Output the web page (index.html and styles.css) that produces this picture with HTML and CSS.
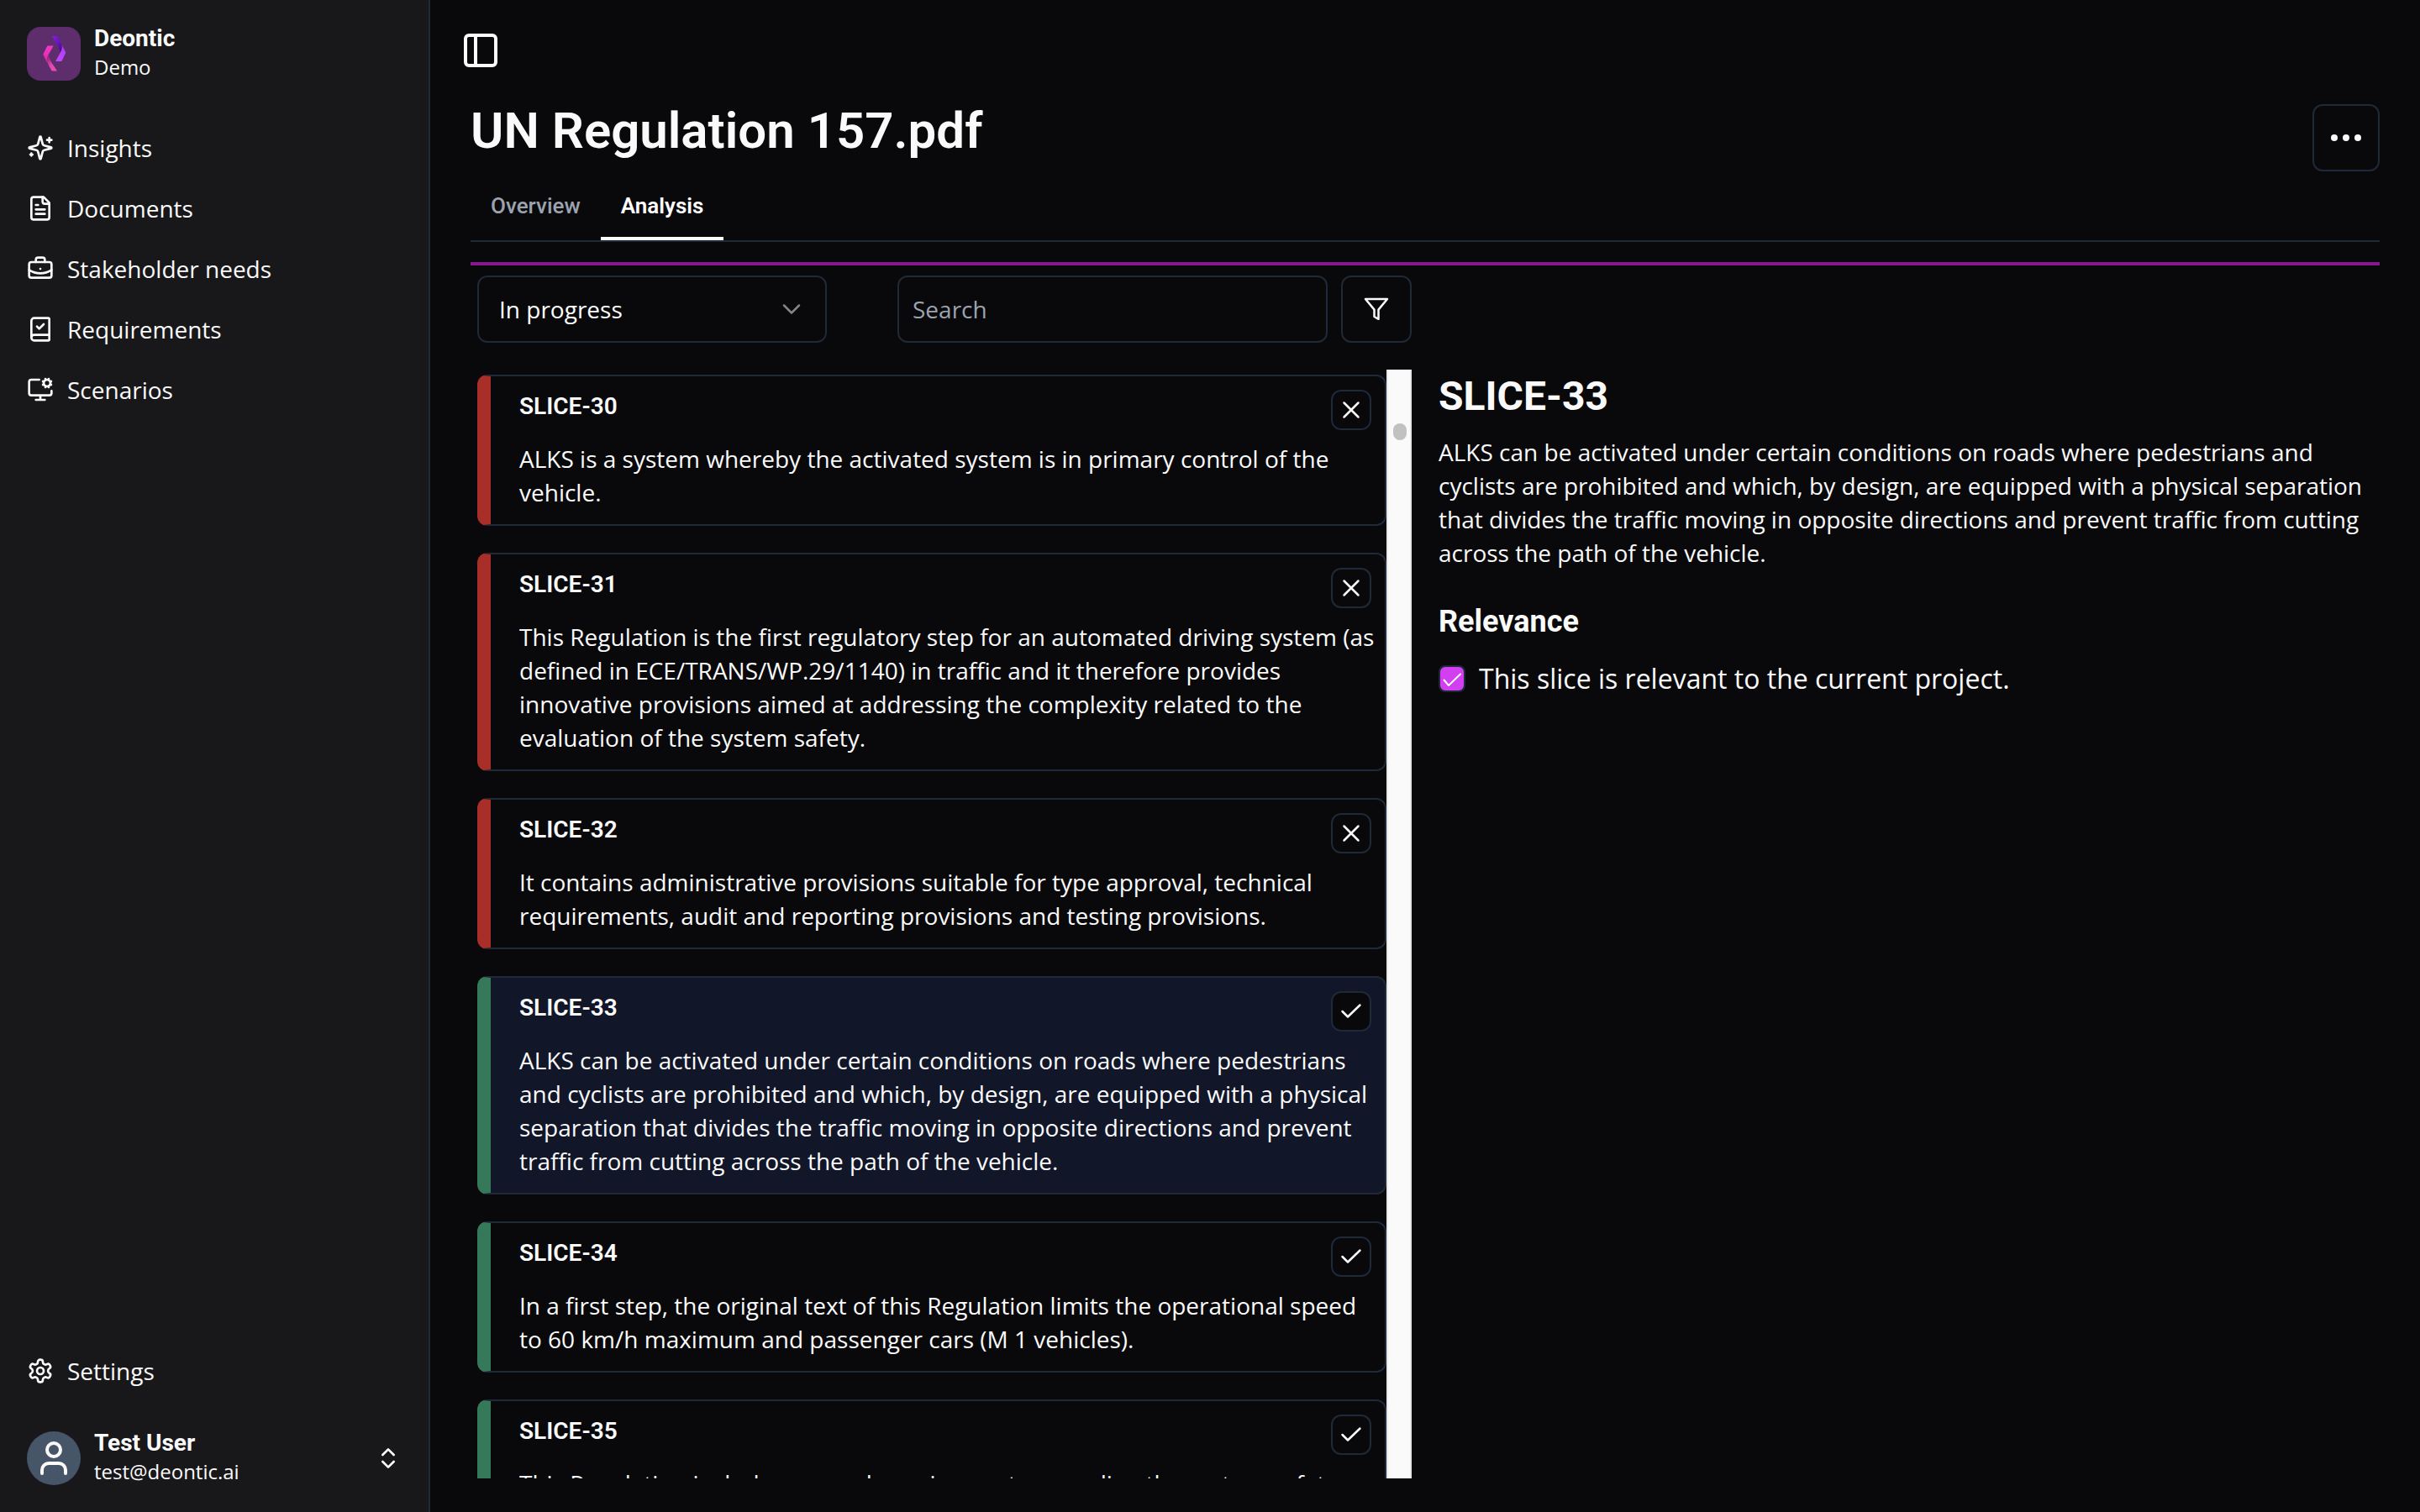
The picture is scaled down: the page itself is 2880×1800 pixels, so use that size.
FILE: index.html
```html
<!DOCTYPE html>
<html lang="en">
<head>
<meta charset="utf-8">
<title>UN Regulation 157.pdf – Deontic</title>
<link rel="stylesheet" href="styles.css">
</head>
<body>
<svg class="sprite" aria-hidden="true">
  <symbol id="i-x" viewBox="0 0 32 32"><path d="M7.5 7.5 24.5 24.5M24.5 7.5 7.5 24.5"/></symbol>
  <symbol id="i-check" viewBox="0 0 32 32"><path d="M5.5 16 12 22.5 26.5 8.5"/></symbol>
</svg>
<div class="app">
  <aside class="sidebar">
    <div class="account">
      <svg class="logo" viewBox="0 0 64 64" aria-hidden="true">
        <defs>
          <linearGradient id="g1" x1="0" y1="0" x2="1" y2="1"><stop offset="0" stop-color="#8a1fe0"/><stop offset=".45" stop-color="#6a14c8"/><stop offset="1" stop-color="#3a0a6e"/></linearGradient>
          <linearGradient id="g2" x1="0" y1="0" x2="0" y2="1"><stop offset="0" stop-color="#a93df0"/><stop offset="1" stop-color="#c145ff"/></linearGradient>
          <linearGradient id="g3" x1="0" y1="0" x2="1" y2="1"><stop offset="0" stop-color="#f050b8"/><stop offset=".45" stop-color="#e048b0"/><stop offset="1" stop-color="#7a1560"/></linearGradient>
          <linearGradient id="g4" x1="0" y1="0" x2="0" y2="1"><stop offset="0" stop-color="#d828a8"/><stop offset="1" stop-color="#f03ac8"/></linearGradient>
        </defs>
        <rect width="64" height="64" rx="16" fill="#5d2d6c"/>
        <path d="M29.7 11H36L42.500 23C43 26 41.500 29 39.500 31C39.500 26 36.500 21 33.500 17Z" fill="url(#g1)"/>
        <path d="M41.500 21 46.300 30.700 41.300 41H34L39.500 31C41.500 28 42.300 25 41.500 21Z" fill="url(#g2)"/>
        <g transform="rotate(180 32.8 31.7)">
          <path d="M29.700 11H36L42.500 23C43 26 41.500 29 39.500 31C39.500 26 36.500 21 33.500 17Z" fill="url(#g3)"/>
          <path d="M41.500 21 46.300 30.700 41.300 41H34L39.500 31C41.500 28 42.300 25 41.500 21Z" fill="url(#g4)"/>
        </g>
      </svg>
      <div class="account-text">
        <span class="account-name">Deontic</span>
        <span class="account-sub">Demo</span>
      </div>
    </div>
    <nav class="nav" aria-label="Main">
      <a class="nav-link" href="#insights"><svg class="icon" viewBox="0 0 24 24"><path d="M9.937 15.500A2 2 0 0 0 8.500 14.063l-6.135-1.582a.5.5 0 0 1 0-.962L8.500 9.936A2 2 0 0 0 9.937 8.500l1.582-6.135a.5.5 0 0 1 .963 0L14.063 8.500A2 2 0 0 0 15.500 9.937l6.135 1.581a.5.5 0 0 1 0 .964L15.500 14.063a2 2 0 0 0-1.437 1.437l-1.582 6.135a.5.5 0 0 1-.963 0z"/><path d="M20 3v4M22 5h-4M4 17v2M5 18H3"/></svg>Insights</a>
      <a class="nav-link" href="#documents"><svg class="icon" viewBox="0 0 24 24"><path d="M15 2H6a2 2 0 0 0-2 2v16a2 2 0 0 0 2 2h12a2 2 0 0 0 2-2V7Z"/><path d="M14 2v4a2 2 0 0 0 2 2h4M10 9H8M16 13H8M16 17H8"/></svg>Documents</a>
      <a class="nav-link" href="#needs"><svg class="icon" viewBox="0 0 24 24"><path d="M12 12h.01M16 6V4a2 2 0 0 0-2-2h-4a2 2 0 0 0-2 2v2M22 13a18.150 18.150 0 0 1-20 0"/><rect width="20" height="14" x="2" y="6" rx="2"/></svg>Stakeholder needs</a>
      <a class="nav-link" href="#requirements"><svg class="icon" viewBox="0 0 24 24"><path d="M4 19.500v-15A2.500 2.500 0 0 1 6.500 2H19a1 1 0 0 1 1 1v18a1 1 0 0 1-1 1H6.500a1 1 0 0 1 0-5H20M9 9.500l2 2 4-4"/></svg>Requirements</a>
      <a class="nav-link" href="#scenarios"><svg class="icon" viewBox="0 0 24 24"><path d="M12 17v4M15.200 4.900l-.9-.4M15.200 7.100l-.9.4M16.900 3.200l-.4-.9M16.900 8.800l-.4.9M19.500 2.300l-.4.9M19.500 9.700l-.4-.9M21.700 4.500l-.9.4M21.700 7.500l-.9-.4M22 13v2a2 2 0 0 1-2 2H4a2 2 0 0 1-2-2V5a2 2 0 0 1 2-2h7M8 21h8"/><circle cx="18" cy="6" r="3"/></svg>Scenarios</a>
    </nav>
    <nav class="nav nav-bottom" aria-label="Settings">
      <a class="nav-link" href="#settings"><svg class="icon" viewBox="0 0 24 24"><path d="M12.220 2h-.44a2 2 0 0 0-2 2v.18a2 2 0 0 1-1 1.730l-.43.25a2 2 0 0 1-2 0l-.15-.08a2 2 0 0 0-2.730.73l-.22.38a2 2 0 0 0 .73 2.730l.15.1a2 2 0 0 1 1 1.720v.51a2 2 0 0 1-1 1.740l-.15.09a2 2 0 0 0-.73 2.730l.22.38a2 2 0 0 0 2.730.73l.15-.08a2 2 0 0 1 2 0l.43.25a2 2 0 0 1 1 1.730V20a2 2 0 0 0 2 2h.44a2 2 0 0 0 2-2v-.18a2 2 0 0 1 1-1.730l.43-.25a2 2 0 0 1 2 0l.15.08a2 2 0 0 0 2.730-.73l.22-.39a2 2 0 0 0-.73-2.730l-.15-.08a2 2 0 0 1-1-1.740v-.5a2 2 0 0 1 1-1.740l.15-.09a2 2 0 0 0 .73-2.730l-.22-.38a2 2 0 0 0-2.730-.73l-.15.08a2 2 0 0 1-2 0l-.43-.25a2 2 0 0 1-1-1.730V4a2 2 0 0 0-2-2z"/><circle cx="12" cy="12" r="3"/></svg>Settings</a>
    </nav>
    <button class="account user" type="button">
      <span class="avatar"><svg viewBox="0 0 24 24" aria-hidden="true"><path d="M19 21v-2a4 4 0 0 0-4-4H9a4 4 0 0 0-4 4v2"/><circle cx="12" cy="7" r="4"/></svg></span>
      <span class="account-text">
        <span class="account-name">Test User</span>
        <span class="account-sub">test@deontic.ai</span>
      </span>
      <svg class="icon" viewBox="0 0 24 24" aria-hidden="true"><path d="m7 15 5 5 5-5M7 9l5-5 5 5"/></svg>
    </button>
  </aside>

  <main class="main">
    <button class="toggle" type="button" aria-label="Toggle sidebar"><svg viewBox="0 0 24 24"><rect width="18" height="18" x="3" y="3" rx="2"/><path d="M9 3v18"/></svg></button>
    <header class="page-head">
      <h1 class="page-title">UN Regulation 157.pdf</h1>
      <button class="more" type="button" aria-label="More actions"><svg viewBox="0 0 40 40"><circle cx="6" cy="20" r="4"/><circle cx="20" cy="20" r="4"/><circle cx="34" cy="20" r="4"/></svg></button>
    </header>
    <nav class="tabs" aria-label="Document">
      <a class="tab" href="#overview">Overview</a>
      <a class="tab tab-active" href="#analysis" aria-current="page">Analysis</a>
    </nav>
    <div class="progress"></div>

    <div class="panes">
      <form class="toolbar">
        <div class="status">
          <select class="status-select" aria-label="Status"><option>In progress</option><option>Completed</option></select>
          <svg class="status-arrow" viewBox="0 0 32 32" aria-hidden="true"><path d="m7 11.500 9 9 9-9"/></svg>
        </div>
        <div class="search">
          <input class="search-input" type="search" placeholder="Search" aria-label="Search">
          <button class="filter" type="button" aria-label="Filter"><svg class="thin-icon" viewBox="0 0 32 32"><path d="M29 4H3L13.500 16.600V25L18.500 27.800V16.600Z"/></svg></button>
        </div>
      </form>

      <section class="list" aria-label="Slices">
        <div class="cards">
          <article class="card card-no">
            <div class="card-head"><h2 class="card-title">SLICE-30</h2><button class="mark" type="button" aria-label="Not relevant"><svg class="thin-icon"><use href="#i-x"/></svg></button></div>
            <p class="card-text">ALKS is a system whereby the activated system is in primary control of the vehicle.</p>
          </article>
          <article class="card card-no">
            <div class="card-head"><h2 class="card-title">SLICE-31</h2><button class="mark" type="button" aria-label="Not relevant"><svg class="thin-icon"><use href="#i-x"/></svg></button></div>
            <p class="card-text">This Regulation is the first regulatory step for an automated driving system (as defined in ECE/TRANS/WP.29/1140) in traffic and it therefore provides innovative provisions aimed at addressing the complexity related to the evaluation of the system safety.</p>
          </article>
          <article class="card card-no">
            <div class="card-head"><h2 class="card-title">SLICE-32</h2><button class="mark" type="button" aria-label="Not relevant"><svg class="thin-icon"><use href="#i-x"/></svg></button></div>
            <p class="card-text">It contains administrative provisions suitable for type approval, technical requirements, audit and reporting provisions and testing provisions.</p>
          </article>
          <article class="card card-yes card-selected">
            <div class="card-head"><h2 class="card-title">SLICE-33</h2><button class="mark" type="button" aria-label="Relevant"><svg class="thin-icon"><use href="#i-check"/></svg></button></div>
            <p class="card-text">ALKS can be activated under certain conditions on roads where pedestrians and cyclists are prohibited and which, by design, are equipped with a physical separation that divides the traffic moving in opposite directions and prevent traffic from cutting across the path of the vehicle.</p>
          </article>
          <article class="card card-yes">
            <div class="card-head"><h2 class="card-title">SLICE-34</h2><button class="mark" type="button" aria-label="Relevant"><svg class="thin-icon"><use href="#i-check"/></svg></button></div>
            <p class="card-text">In a first step, the original text of this Regulation limits the operational speed to 60 km/h maximum and passenger cars (M 1 vehicles).</p>
          </article>
          <article class="card card-yes">
            <div class="card-head"><h2 class="card-title">SLICE-35</h2><button class="mark" type="button" aria-label="Relevant"><svg class="thin-icon"><use href="#i-check"/></svg></button></div>
            <p class="card-text">This Regulation includes general requirements regarding the system safety</p>
          </article>
        </div>
        <div class="track" aria-hidden="true"><div class="thumb"></div></div>
      </section>

      <section class="detail">
        <h2 class="detail-title">SLICE-33</h2>
        <p class="detail-text">ALKS can be activated under certain conditions on roads where pedestrians and cyclists are prohibited and which, by design, are equipped with a physical separation that divides the traffic moving in opposite directions and prevent traffic from cutting across the path of the vehicle.</p>
        <h3 class="detail-sub">Relevance</h3>
        <label class="relevance">
          <span class="checkbox"><input class="checkbox-input" type="checkbox" checked><svg class="checkbox-tick" viewBox="0 0 32 32" aria-hidden="true"><path d="m6.500 17.500 5.500 6.500L26 10.500"/></svg></span>
          This slice is relevant to the current project.
        </label>
      </section>
    </div>
  </main>
</div>
</body>
</html>
```
FILE: styles.css
```css
:root {
  --bg: #09090b;
  --panel: #18181b;
  --line: #1f2937;
  --text: #fafafa;
  --muted: #9ca3af;
  --heading: Roboto, "Liberation Sans", sans-serif;
}

* { box-sizing: border-box; }

body {
  margin: 0;
  background: var(--bg);
  color: var(--text);
  font: 400 28px/40px "Open Sans", "Noto Sans", sans-serif;
}

h1, h2, h3, p { margin: 0; }

button, input, select { font: inherit; color: inherit; }

button { padding: 0; background: none; border: 0; }

svg { fill: none; stroke: currentColor; stroke-width: 2; stroke-linecap: round; stroke-linejoin: round; flex: none; }

.sprite { display: none; }
.icon { width: 32px; height: 32px; }
.thin-icon { width: 32px; height: 32px; }
.thin-icon, .status-arrow { stroke-width: 2.5; }

.app { display: flex; height: 100vh; }

/* Sidebar */
.sidebar {
  flex: none;
  width: 512px;
  display: flex;
  flex-direction: column;
  padding: 28px 32px;
  background: var(--panel);
  border-right: 2px solid var(--line);
}

.account { display: flex; align-items: center; gap: 16px; text-align: left; }
.account-text { flex: 1; display: flex; flex-direction: column; padding-bottom: 4px; }
.account-name { font: 700 28px/36px var(--heading); }
.account-sub { font-size: 24px; line-height: 32px; }

.logo { width: 64px; height: 64px; stroke: none; }

.nav { display: flex; flex-direction: column; margin-top: 40px; }
.nav-link {
  display: flex;
  align-items: center;
  gap: 16px;
  height: 72px;
  color: inherit;
  text-decoration: none;
}
.nav-bottom { margin-top: auto; }

.user { margin-top: 32px; }
.avatar {
  display: flex;
  align-items: center;
  justify-content: center;
  width: 64px;
  height: 64px;
  border-radius: 50%;
  background: #475569;
}
.avatar svg { width: 48px; height: 48px; }

/* Page */
.main {
  flex: 1;
  min-width: 0;
  display: flex;
  flex-direction: column;
  padding: 36px 48px 40px;
}

.toggle { width: 48px; height: 48px; margin-left: -12px; }
.toggle svg, .more svg { display: block; }

.page-head {
  display: flex;
  justify-content: space-between;
  align-items: flex-start;
  margin-top: 40px;
}
.page-title { font: 600 60px/64px var(--heading); }
.more {
  display: flex;
  align-items: center;
  justify-content: center;
  width: 80px;
  height: 80px;
  border: 2px solid var(--line);
  border-radius: 12px;
}
.more svg { width: 40px; height: 40px; fill: currentColor; stroke: none; }

.tabs { display: flex; border-bottom: 2px solid var(--line); }
.tab {
  padding: 0 24px;
  border: solid transparent;
  border-width: 4px 0;
  color: var(--muted);
  font: 500 26px/74px var(--heading);
  text-decoration: none;
}
.tab-active { color: #fff; border-bottom-color: #fff; font-weight: 600; }

.progress { flex: none; height: 4px; margin: 24px 0 12px; background: #86198f; }

.panes {
  flex: 1;
  min-height: 0;
  display: grid;
  grid-template-columns: 35fr 36fr;
  grid-template-rows: auto minmax(0, 1fr);
  gap: 32px 0;
}

.toolbar { display: flex; justify-content: space-between; padding-left: 8px; }
.status { position: relative; width: 416px; }
.status-select {
  appearance: none;
  width: 100%;
  height: 80px;
  padding: 0 24px;
  background: var(--bg);
  border: 2px solid var(--line);
  border-radius: 12px;
  color: #fff;
}
.status-arrow { position: absolute; right: 26px; top: 24px; width: 32px; height: 32px; color: #848485; pointer-events: none; }

.search { display: flex; gap: 16px; }
.search-input {
  appearance: none;
  width: 512px;
  height: 80px;
  padding: 0 16px;
  background: var(--bg);
  border: 2px solid var(--line);
  border-radius: 12px;
}
.search-input::placeholder { color: var(--muted); }
.filter {
  display: flex;
  align-items: center;
  justify-content: center;
  width: 84px;
  border: 2px solid var(--line);
  border-radius: 12px;
}

/* Slice list */
.list { grid-row: 2; display: flex; overflow: hidden; padding-left: 8px; }
.cards { flex: 1; display: flex; flex-direction: column; gap: 32px; padding-top: 6px; }
.card {
  flex: none;
  padding: 16px 4px 18px 34px;
  border: 2px solid var(--line);
  border-left-width: 16px;
  border-radius: 12px;
}
.card-no { border-left-color: #a82e28; }
.card-yes { border-left-color: #35785a; }
.card-selected { background: #111629; }
.card-head { display: flex; justify-content: space-between; align-items: flex-start; padding: 0 12px 14px 0; }
.card-title { font: 600 28px/40px var(--heading); }
.mark {
  display: flex;
  align-items: center;
  justify-content: center;
  width: 48px;
  height: 48px;
  background: var(--bg);
  border: 2px solid var(--line);
  border-radius: 12px;
}

.track {
  flex: none;
  width: 30px;
  padding: 64px 6px 0;
  background: #fafafa;
  border: solid #e8e8e8;
  border-width: 0 2px;
}
.thumb { width: 16px; height: 20px; border-radius: 8px; background: #c1c1c1; }

/* Slice detail */
.detail { grid-row: 2; grid-column: 2; padding-left: 32px; }
.detail-title { font: 700 48px/64px var(--heading); }
.detail-text { margin-top: 14px; }
.detail-sub { margin-top: 38px; font: 700 36px/48px var(--heading); }
.relevance { display: flex; align-items: center; gap: 16px; margin-top: 24px; font-size: 32px; }

.checkbox { position: relative; display: flex; }
.checkbox-input {
  appearance: none;
  width: 32px;
  height: 32px;
  margin: 0;
  background: #d13ff0;
  border: 2px solid var(--line);
  border-radius: 8px;
}
.checkbox-tick { position: absolute; inset: 0; width: 32px; height: 32px; pointer-events: none; }
```
